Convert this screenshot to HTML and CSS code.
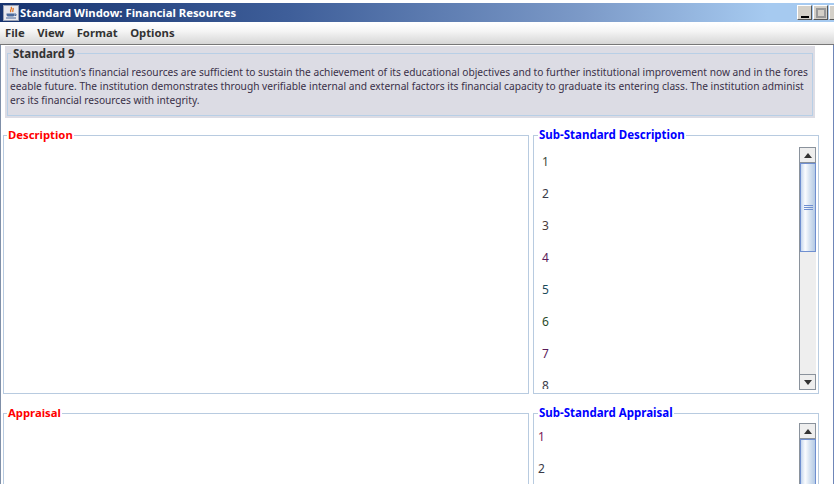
FILE: index.html
```
<!DOCTYPE html>
<html lang="en">
<head>
<meta charset="utf-8">
<title>Standard Window: Financial Resources</title>
<link rel="stylesheet" href="styles.css">
</head>
<body>
<div class="window">
  <div class="title-bar">
    <svg class="java-icon" width="16" height="16" viewBox="0 0 16 16">
      <rect x="0.5" y="0.5" width="15" height="15" fill="#e8e8ee" stroke="#9aa2b4"/>
      <path d="M8 2c2 2-2 3 0 5M10 3c1 2-1 2 0 4" fill="none" stroke="#e0701c" stroke-width="1.3"/>
      <path d="M3.5 8.5h8v1c0 1.5-1 2-2 2h-4c-1 0-2-.5-2-2z" fill="#4a6a9c"/>
      <path d="M11.5 9h1.5v1.5h-1.5M3 13h10" fill="none" stroke="#4a6a9c"/>
    </svg>
    <span class="title-text">Standard Window: Financial Resources</span>
    <div class="win-buttons">
      <div class="win-btn"><span class="glyph-min"></span></div>
      <div class="win-btn"><span class="glyph-max"></span></div>
      <div class="win-btn"></div>
    </div>
  </div>
  <div class="menu-bar">
    <span class="menu-item">File</span>
    <span class="menu-item">View</span>
    <span class="menu-item">Format</span>
    <span class="menu-item">Options</span>
  </div>
  <div class="content">
    <div class="standard-wrap">
      <fieldset class="standard">
        <legend>Standard 9</legend>
        <p>The institution's financial resources are sufficient to sustain the achievement of its educational objectives and to further institutional improvement now and in the fores<br>eeable future. The institution demonstrates through verifiable internal and external factors its financial capacity to graduate its entering class. The institution administ<br>ers its financial resources with integrity.</p>
      </fieldset>
    </div>
    <div class="row row-desc">
      <fieldset class="panel main"><legend class="red">Description</legend></fieldset>
      <fieldset class="panel side">
        <legend class="blue">Sub-Standard Description</legend>
        <div class="list-area">
          <div class="nums nums-desc">
            <div class="c1">1</div><div class="c2">2</div><div class="c3">3</div><div class="c4">4</div>
            <div class="c5">5</div><div class="c6">6</div><div class="c4">7</div><div class="c2">8</div>
          </div>
          <div class="scrollbar">
            <div class="sb-btn"><span class="arrow-up"></span></div>
            <div class="sb-thumb thumb-desc"><span class="grip"></span></div>
            <div class="sb-track"></div>
            <div class="sb-btn"><span class="arrow-down"></span></div>
          </div>
        </div>
      </fieldset>
    </div>
    <div class="row row-appr">
      <fieldset class="panel main"><legend class="red">Appraisal</legend></fieldset>
      <fieldset class="panel side">
        <legend class="blue">Sub-Standard Appraisal</legend>
        <div class="list-area list-appr">
          <div class="nums nums-appr">
            <div class="c7">1</div><div class="c2">2</div>
          </div>
          <div class="scrollbar">
            <div class="sb-btn"><span class="arrow-up"></span></div>
            <div class="sb-thumb thumb-appr"></div>
          </div>
        </div>
      </fieldset>
    </div>
  </div>
</div>
</body>
</html>
```
FILE: styles.css
```
* { box-sizing: border-box; }
html, body { margin: 0; height: 100%; overflow: hidden; background: #fff; }
body { font-family: "Noto Sans", "DejaVu Sans", sans-serif; }
.window {
  width: 834px; height: 485px; overflow: hidden;
  display: flex; flex-direction: column;
  padding-top: 3px; background: #fff;
  border-top: 1px solid #b8b4ac;
  margin-top: -1px;
}
.title-bar {
  height: 19px; flex: none;
  display: flex; align-items: center;
  padding-left: 3px;
  background: linear-gradient(90deg, #16336f 0%, #3f5f9a 35%, #7c9ac8 70%, #a6caf0 92%);
}
.java-icon { flex: none; }
.title-text {
  margin-left: 1px; color: #fff; font-weight: bold; font-size: 11.3px;
  white-space: nowrap;
}
.win-buttons { margin-left: auto; display: flex; gap: 1px; margin-right: -10px; }
.win-btn {
  width: 15px; height: 15px; background: #d4d0c8;
  border: 1px solid; border-color: #fff #555 #555 #fff;
  display: flex; align-items: flex-end; justify-content: center;
}
.glyph-min { width: 8px; height: 2px; background: #000; margin-bottom: 1px; }
.glyph-max { width: 10px; height: 10px; border: 2px solid #999; background: #d4d0c8; margin-bottom: 1px; }
.menu-bar {
  height: 23px; flex: none;
  display: flex; align-items: center; gap: 12.5px;
  padding: 0 0 2px 5px;
  background: linear-gradient(#fff 0%, #f4f4f4 40%, #d6d6d6 100%);
  border-top: 1px solid #fff;
  border-bottom: 1px solid #777;
}
.menu-item { font-weight: bold; font-size: 11.3px; color: #333; }
.content {
  flex: 1; min-height: 0;
  border-left: 1px solid #7f8fa8;
  border-right: 1px solid #6f86b8;
  padding: 0 14px 0 2px;
}
.standard-wrap {
  margin: 1px 4px 0 2px;
  height: 72px;
  background: #dcdce4;
  padding: 0 2px 2px;
}
fieldset { margin: 0; min-width: 0; }
.standard {
  height: 69px; margin-top: 0;
  border: 1px solid #b8cfe6;
  padding: 0 2px;
  position: relative; top: 1px;
}
.standard legend {
  padding: 0 2px; margin-left: 1px;
  font-size: 11.5px; font-weight: bold; color: #333; line-height: 13px;
}
.standard p {
  margin: 5px 0 0; font-size: 10.2px; line-height: 14px; color: #3a3048;
  white-space: nowrap;
}
.row { display: grid; grid-template-columns: 526px 286px; gap: 4px; }
.row-desc { margin-top: 10px; height: 266px; }
.row-appr { margin-top: 12px; height: 100px; }
.panel { border: 1px solid #b8cbe0; padding: 0; height: 100%; }
.panel legend {
  padding: 0 1px; margin-left: 3px;
  font-size: 11.3px; font-weight: bold; line-height: 14px;
}
.side legend { margin-left: 4px; font-size: 11.5px; }
.red { color: #f00; }
.blue { color: #00f; }
.list-area { display: flex; height: 100%; }
.nums { flex: 1; overflow: hidden; font-size: 12px; line-height: 16px; }
.nums div { height: 32px; }
.nums-desc { padding: 12px 0 0 8px; height: 247px; }
.nums-appr { padding: 9px 0 0 4px; }
.c1 { color: #3b4a3b; } .c2 { color: #3a3a48; } .c3 { color: #4a3a3a; }
.c4 { color: #5a1a5a; } .c5 { color: #1a4a5a; } .c6 { color: #2a4a2a; }
.c7 { color: #7a1a5a; }
.list-area .scrollbar { margin: 5px 2px 0 0; }
.scrollbar {
  width: 17px; flex: none; height: 243px;
  display: flex; flex-direction: column;
  background: #eee;
  border-left: 1px solid #8a929c;
}
.list-appr .scrollbar { margin-top: 3px; }
.sb-btn {
  height: 16px; flex: none; background: #eee;
  border: 1px solid #8a929c; border-left: 0;
  display: flex; align-items: center; justify-content: center;
}
.arrow-up { border: 4px solid transparent; border-top: 0; border-bottom: 5px solid #333; }
.arrow-down { border: 4px solid transparent; border-bottom: 0; border-top: 5px solid #333; }
.sb-thumb {
  flex: none;
  border: 1px solid #6f8fd0; border-left-width: 1px;
  background: linear-gradient(90deg, #c4d6ee 0%, #fbfcfe 30%, #d8e4f2 60%, #b4cae4 100%);
  display: flex; align-items: center; justify-content: center;
}
.thumb-desc { height: 89px; }
.thumb-appr { height: 60px; }
.sb-track { flex: 1; background: #eee; }
.grip { width: 9px; height: 5px; border-top: 1px solid #6f8fd0; border-bottom: 1px solid #6f8fd0; position: relative; }
.grip::after { content: ""; position: absolute; left: 0; right: 0; top: 1px; height: 1px; background: #6f8fd0; }
```
